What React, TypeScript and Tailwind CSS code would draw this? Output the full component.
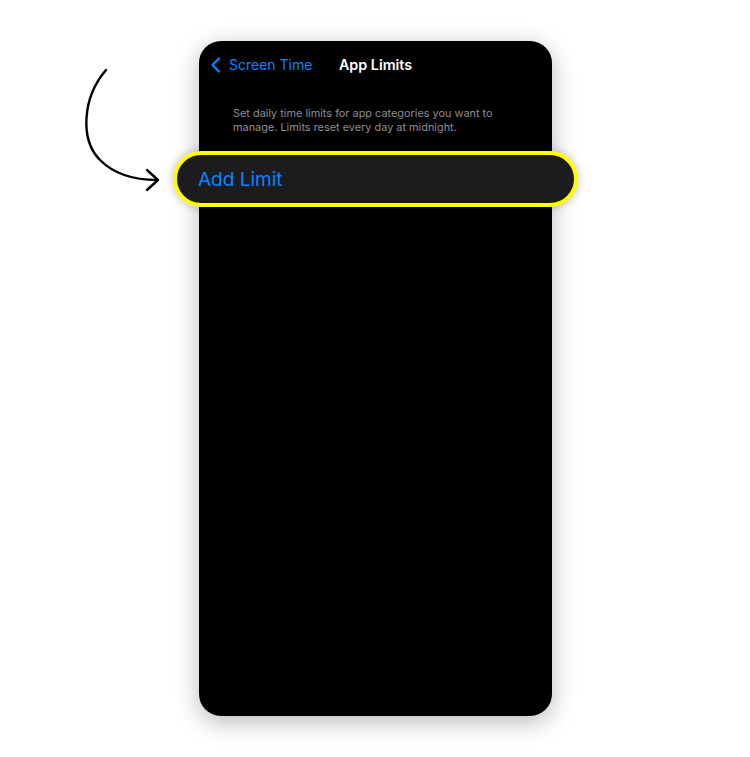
import React from "react";

export default function App() {
  return (
    <div className="relative w-[750px] h-[757px] bg-white overflow-hidden" style={{ fontFamily: "Inter, 'Noto Sans', sans-serif" }}>
      <svg className="absolute left-0 top-0" width="200" height="220" viewBox="0 0 200 220" fill="none">
        <path d="M106 70 C 82 98, 80 140, 100 160 C 115 175, 135 180, 157 180" stroke="#000" strokeWidth="2.4" strokeLinecap="round" />
        <path d="M147 170 L 158 180 L 147 190" stroke="#000" strokeWidth="2.4" strokeLinecap="round" strokeLinejoin="round" />
      </svg>
      <div className="ml-[199px] mt-[41px] w-[353px] h-[675px] bg-black rounded-[22px] shadow-[0_6px_24px_rgba(0,0,0,0.28)] flex flex-col">
        <div className="grid grid-cols-[1fr_auto_1fr] items-center h-[24px] mt-[12px]">
          <div className="flex items-center pl-[11px] gap-[8px] text-[#0a84ff]">
            <svg width="11" height="16" viewBox="0 0 11 16" fill="none">
              <path d="M9 1.5 L2.5 8 L9 14.5" stroke="#0a84ff" strokeWidth="2.2" strokeLinecap="round" strokeLinejoin="round" />
            </svg>
            <span className="text-[14px] leading-none">Screen Time</span>
          </div>
          <div className="text-white text-[14.3px] font-semibold leading-none">App Limits</div>
          <div />
        </div>
        <p className="mt-[29px] pl-[34px] pr-[20px] text-[10.9px] leading-[14px] text-[#8e8e93]">
          Set daily time limits for app categories you want to
          <br />
          manage. Limits reset every day at midnight.
        </p>
        <div className="mt-[17px] -mx-[26px] h-[56px] rounded-full border-[4px] border-[#ffff00] bg-[#1c1c1e] flex items-center pl-[21px] shadow-[0_0_10px_rgba(0,0,0,0.25)]">
          <span className="text-[#0a84ff] text-[19px] leading-none">Add Limit</span>
        </div>
      </div>
    </div>
  );
}
